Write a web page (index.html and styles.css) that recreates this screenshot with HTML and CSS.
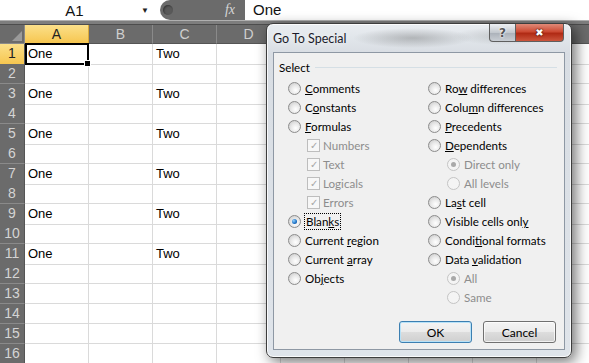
FILE: index.html
```html
<!DOCTYPE html>
<html>
<head>
    <title>Go To Special</title>
    <link rel="stylesheet" href="styles.css">
</head>
<body>
    <div class="formula-bar">
        <div class="name-box"><span class="name">A1</span><span class="drop">&#9660;</span></div>
        <div class="fx-area"><span class="knob"></span><span class="fx">fx</span></div>
        <div class="formula-input">One</div>
    </div>
    <div class="bar-strip"></div>

    <div class="sheet">
        <!-- headers E to H sit under the dialog, so they carry no letter -->
        <div class="row head">
            <div class="corner"><svg width="10" height="10" viewBox="0 0 10 10"><polygon points="10,0 10,10 0,10" fill="#9a9a9a"/></svg></div>
            <div class="ch sel">A</div><div class="ch">B</div><div class="ch">C</div><div class="ch">D</div><div class="ch"></div><div class="ch"></div><div class="ch"></div><div class="ch"></div><div class="ch"></div>
        </div>
        <div class="row"><div class="rh sel">1</div><div class="c active">One</div><div class="c"></div><div class="c">Two</div><div class="c"></div><div class="c"></div><div class="c"></div><div class="c"></div><div class="c"></div><div class="c"></div></div>
        <div class="row"><div class="rh">2</div><div class="c"></div><div class="c"></div><div class="c"></div><div class="c"></div><div class="c"></div><div class="c"></div><div class="c"></div><div class="c"></div><div class="c"></div></div>
        <div class="row"><div class="rh">3</div><div class="c">One</div><div class="c"></div><div class="c">Two</div><div class="c"></div><div class="c"></div><div class="c"></div><div class="c"></div><div class="c"></div><div class="c"></div></div>
        <div class="row"><div class="rh">4</div><div class="c"></div><div class="c"></div><div class="c"></div><div class="c"></div><div class="c"></div><div class="c"></div><div class="c"></div><div class="c"></div><div class="c"></div></div>
        <div class="row"><div class="rh">5</div><div class="c">One</div><div class="c"></div><div class="c">Two</div><div class="c"></div><div class="c"></div><div class="c"></div><div class="c"></div><div class="c"></div><div class="c"></div></div>
        <div class="row"><div class="rh">6</div><div class="c"></div><div class="c"></div><div class="c"></div><div class="c"></div><div class="c"></div><div class="c"></div><div class="c"></div><div class="c"></div><div class="c"></div></div>
        <div class="row"><div class="rh">7</div><div class="c">One</div><div class="c"></div><div class="c">Two</div><div class="c"></div><div class="c"></div><div class="c"></div><div class="c"></div><div class="c"></div><div class="c"></div></div>
        <div class="row"><div class="rh">8</div><div class="c"></div><div class="c"></div><div class="c"></div><div class="c"></div><div class="c"></div><div class="c"></div><div class="c"></div><div class="c"></div><div class="c"></div></div>
        <div class="row"><div class="rh">9</div><div class="c">One</div><div class="c"></div><div class="c">Two</div><div class="c"></div><div class="c"></div><div class="c"></div><div class="c"></div><div class="c"></div><div class="c"></div></div>
        <div class="row"><div class="rh">10</div><div class="c"></div><div class="c"></div><div class="c"></div><div class="c"></div><div class="c"></div><div class="c"></div><div class="c"></div><div class="c"></div><div class="c"></div></div>
        <div class="row"><div class="rh">11</div><div class="c">One</div><div class="c"></div><div class="c">Two</div><div class="c"></div><div class="c"></div><div class="c"></div><div class="c"></div><div class="c"></div><div class="c"></div></div>
        <div class="row"><div class="rh">12</div><div class="c"></div><div class="c"></div><div class="c"></div><div class="c"></div><div class="c"></div><div class="c"></div><div class="c"></div><div class="c"></div><div class="c"></div></div>
        <div class="row"><div class="rh">13</div><div class="c"></div><div class="c"></div><div class="c"></div><div class="c"></div><div class="c"></div><div class="c"></div><div class="c"></div><div class="c"></div><div class="c"></div></div>
        <div class="row"><div class="rh">14</div><div class="c"></div><div class="c"></div><div class="c"></div><div class="c"></div><div class="c"></div><div class="c"></div><div class="c"></div><div class="c"></div><div class="c"></div></div>
        <div class="row"><div class="rh">15</div><div class="c"></div><div class="c"></div><div class="c"></div><div class="c"></div><div class="c"></div><div class="c"></div><div class="c"></div><div class="c"></div><div class="c"></div></div>
        <div class="row"><div class="rh">16</div><div class="c"></div><div class="c"></div><div class="c"></div><div class="c"></div><div class="c"></div><div class="c"></div><div class="c"></div><div class="c"></div><div class="c"></div></div>
    </div>

    <!-- Go To Special dialog -->
    <div class="dialog">
        <div class="titlebar">
            <span class="title">Go To Special</span>
            <div class="caption-btns">
                <span class="help">?</span>
                <span class="close">&#10006;</span>
            </div>
        </div>
        <div class="client">
            <div class="group-title"><span>Select</span><span class="rule"></span></div>
            <div class="options">
                <div class="col left">
                    <div class="opt"><span class="radio"></span><span><u>C</u>omments</span></div>
                    <div class="opt"><span class="radio"></span><span>C<u>o</u>nstants</span></div>
                    <div class="opt"><span class="radio"></span><span><u>F</u>ormulas</span></div>
                    <div class="opt sub off"><span class="check">&#10003;</span><span>Numbers</span></div>
                    <div class="opt sub off"><span class="check">&#10003;</span><span>Text</span></div>
                    <div class="opt sub off"><span class="check">&#10003;</span><span>Logicals</span></div>
                    <div class="opt sub off"><span class="check">&#10003;</span><span>Errors</span></div>
                    <div class="opt"><span class="radio on"></span><span class="focus">Blan<u>k</u>s</span></div>
                    <div class="opt"><span class="radio"></span><span>Current <u>r</u>egion</span></div>
                    <div class="opt"><span class="radio"></span><span>Current <u>a</u>rray</span></div>
                    <div class="opt"><span class="radio"></span><span>Ob<u>j</u>ects</span></div>
                </div>
                <div class="col right">
                    <div class="opt"><span class="radio"></span><span>Ro<u>w</u> differences</span></div>
                    <div class="opt"><span class="radio"></span><span>Colu<u>m</u>n differences</span></div>
                    <div class="opt"><span class="radio"></span><span><u>P</u>recedents</span></div>
                    <div class="opt"><span class="radio"></span><span><u>D</u>ependents</span></div>
                    <div class="opt sub off"><span class="radio on"></span><span>Direct only</span></div>
                    <div class="opt sub off"><span class="radio"></span><span>All levels</span></div>
                    <div class="opt"><span class="radio"></span><span>La<u>s</u>t cell</span></div>
                    <div class="opt"><span class="radio"></span><span>Visible cells onl<u>y</u></span></div>
                    <div class="opt"><span class="radio"></span><span>Condi<u>t</u>ional formats</span></div>
                    <div class="opt"><span class="radio"></span><span>Data <u>v</u>alidation</span></div>
                    <div class="opt sub off"><span class="radio on"></span><span>All</span></div>
                    <div class="opt sub off"><span class="radio"></span><span>Same</span></div>
                </div>
            </div>
            <div class="buttons">
                <button class="btn default">OK</button>
                <button class="btn">Cancel</button>
            </div>
        </div>
    </div>
</body>
</html>
```

FILE: styles.css
```css
html, body {
    margin: 0;
    padding: 0;
    overflow: hidden;
}

body {
    width: 589px;
    height: 363px;
    background: #ffffff;
    font-family: 'Liberation Sans', Arial, sans-serif;
    position: relative;
}

/* formula bar */
.formula-bar {
    display: flex;
    height: 20px;
    background: #ffffff;
    font-size: 15px;
}
.name-box {
    width: 158px;
    display: flex;
    align-items: center;
}
.name-box .name {
    flex: 1;
    text-align: center;
    padding-left: 8px;
    color: #111;
}
.name-box .drop {
    font-size: 8px;
    color: #222;
    width: 14px;
    margin-right: 3px;
}
.fx-area {
    width: 85px;
    margin-left: 2px;
    background: #6b6b6b;
    border-radius: 10px 0 0 10px;
    display: flex;
    align-items: center;
    justify-content: space-between;
    padding: 0 10px 0 3px;
    box-sizing: border-box;
}
.fx-area .knob {
    width: 10px;
    height: 10px;
    border-radius: 50%;
    background: #595959;
    box-shadow: inset 1px 1px 2px rgba(0,0,0,0.4);
}
.fx-area .fx {
    font-family: 'Liberation Serif', serif;
    font-style: italic;
    color: #d6d6d6;
    font-size: 14px;
}
.formula-input {
    flex: 1;
    padding-left: 8px;
    line-height: 20px;
    color: #111;
}
.bar-strip {
    height: 5px;
    background: #7e7e7e;
    border-top: 1px solid #b0b0b0;
    border-bottom: 1px solid #4d4d4d;
    box-sizing: border-box;
}

/* sheet grid */
.sheet {
    font-size: 13px;
}
.row {
    display: grid;
    grid-template-columns: 25px repeat(9, 64px);
    height: 20px;
}
.row.head {
    height: 19px;
}
.corner {
    background: #6b6b6b;
    border-right: 1px solid #8a8a8a;
    border-bottom: 1px solid #8a8a8a;
    display: flex;
    align-items: flex-end;
    justify-content: flex-end;
    padding: 0 2px 2px 0;
}
.ch {
    background: #6b6b6b;
    color: #cfcfcf;
    text-align: center;
    line-height: 18px;
    border-right: 1px solid #8a8a8a;
    border-bottom: 1px solid #555;
    font-size: 14px;
}
.ch.sel {
    background: linear-gradient(#fbe08a, #f6c650);
    color: #222;
    border-right-color: #d9a93a;
    border-bottom-color: #d9a93a;
}
.rh {
    background: #6b6b6b;
    color: #d4d4d4;
    text-align: center;
    line-height: 19px;
    border-bottom: 1px solid #8a8a8a;
    border-right: 1px solid #555;
    font-size: 14px;
}
.rh.sel {
    background: linear-gradient(#fbe08a, #f6c650);
    color: #222;
    border-bottom-color: #d9a93a;
}
.c {
    border-right: 1px solid #dadada;
    border-bottom: 1px solid #dadada;
    padding-left: 3px;
    line-height: 20px;
    color: #000;
    white-space: nowrap;
}
.c.active {
    position: relative;
}
.c.active::after {
    content: "";
    position: absolute;
    left: 0;
    top: -1px;
    right: -1px;
    bottom: -1px;
    border: 2px solid #000;
}
.c.active::before {
    content: "";
    position: absolute;
    right: -3px;
    bottom: -3px;
    width: 5px;
    height: 5px;
    background: #000;
    border: 1px solid #fff;
    z-index: 1;
}

/* dialog */
.dialog {
    position: absolute;
    left: 266px;
    top: 23px;
    width: 306px;
    height: 335px;
    box-sizing: border-box;
    padding: 0 6px 8px 6px;
    background: linear-gradient(180deg, #e9edf1 0px, #d8dde3 30px, #dfe4ea 100%);
    border: 1px solid #3d3d3d;
    border-radius: 7px;
    box-shadow: 4px 4px 14px rgba(0,0,0,0.55), inset 0 0 0 1px rgba(255,255,255,0.8);
    font-family: Lato, 'Noto Sans', sans-serif;
    font-size: 11.6px;
    color: #000;
}
.titlebar {
    height: 28px;
    display: flex;
    justify-content: space-between;
    align-items: flex-start;
    background: radial-gradient(ellipse 60px 10px at 140px 14px, rgba(90,90,90,0.35), transparent),
                radial-gradient(ellipse 50px 9px at 230px 12px, rgba(110,110,110,0.25), transparent);
}
.title {
    margin-top: 7px;
    font-size: 12.5px;
    line-height: 15px;
    color: #1b1b2a;
    text-shadow: 0 0 6px #fff;
}
.caption-btns {
    display: flex;
    margin-right: 1px;
}
.caption-btns span {
    height: 18px;
    display: flex;
    align-items: center;
    justify-content: center;
    font-weight: bold;
    box-sizing: border-box;
    border: 1px solid #5f5f5f;
    border-top: none;
    font-family: 'DejaVu Sans', sans-serif;
    line-height: 1;
}
.help {
    width: 27px;
    background: linear-gradient(#eef0f3, #c3c8ce 50%, #aab0b8 51%, #c9ced4);
    border-radius: 0 0 0 4px;
    font-size: 12px;
    color: #555;
    text-shadow: 0 0 2px #fff, 0 0 2px #fff;
}
.close {
    width: 48px;
    background: linear-gradient(#e08a78, #cc4a33 45%, #b02a14 55%, #cc553c);
    border-radius: 0 0 4px 0;
    border-left: none !important;
    font-size: 10px;
    color: #fff;
    text-shadow: 0 0 2px #3a0c06, 0 0 1px #3a0c06;
}
.client {
    height: 298px;
    box-sizing: border-box;
    background: #f0f0f0;
    border: 1px solid #8e98a4;
    display: flex;
    flex-direction: column;
}
.group-title {
    margin-top: 7px;
    height: 14px;
    display: flex;
    align-items: center;
    padding: 0 7px 0 5px;
}
.group-title .rule {
    flex: 1;
    margin-left: 5px;
    border-top: 1px solid #d5dfe5;
}
.options {
    margin-top: 5px;
    display: grid;
    grid-template-columns: 154px 1fr;
}
.col.left {
    padding-left: 14px;
}
.opt {
    height: 19px;
    display: flex;
    align-items: center;
    white-space: nowrap;
}
.opt.sub {
    padding-left: 19px;
}
.opt.off {
    color: #8d8d8d;
}
.radio {
    width: 13px;
    height: 13px;
    box-sizing: border-box;
    border-radius: 50%;
    border: 1px solid #8c8c8c;
    background: radial-gradient(circle at 60% 65%, #ffffff 0%, #e9e9e9 45%, #c4c4c4 100%);
    margin-right: 4px;
    display: flex;
    align-items: center;
    justify-content: center;
}
.radio.on::after {
    content: "";
    width: 5px;
    height: 5px;
    border-radius: 50%;
    background: radial-gradient(circle at 35% 35%, #8fd0ff, #1b6fc2 60%, #0c3f86);
}
.off .radio {
    border-color: #c4c4c4;
    background: #f4f4f4;
}
.off .radio.on::after {
    background: #a9a9a9;
}
.check {
    width: 13px;
    height: 13px;
    box-sizing: border-box;
    border: 1px solid #bdbdbd;
    background: #f7f7f7;
    color: #a6a6a6;
    font-size: 10px;
    line-height: 11px;
    text-align: center;
    margin-right: 3px;
}
.focus {
    outline: 1px dotted #000;
    padding: 0 1px;
    line-height: 15px;
}
.buttons {
    margin-top: 14px;
    display: flex;
    justify-content: flex-end;
    gap: 11px;
    padding-right: 8px;
}
.btn {
    width: 73px;
    height: 22px;
    font-family: Lato, 'Noto Sans', sans-serif;
    font-size: 12px;
    color: #000;
    border: 1px solid #707070;
    border-radius: 3px;
    background: linear-gradient(#f4f4f4 0%, #ebebeb 50%, #dddddd 51%, #cfcfcf 100%);
    box-shadow: inset 0 0 0 1px rgba(255,255,255,0.7);
    padding: 0;
}
.btn.default {
    border-color: #3c7fb1;
    box-shadow: inset 0 0 0 1px #b8e2f8;
}
```
